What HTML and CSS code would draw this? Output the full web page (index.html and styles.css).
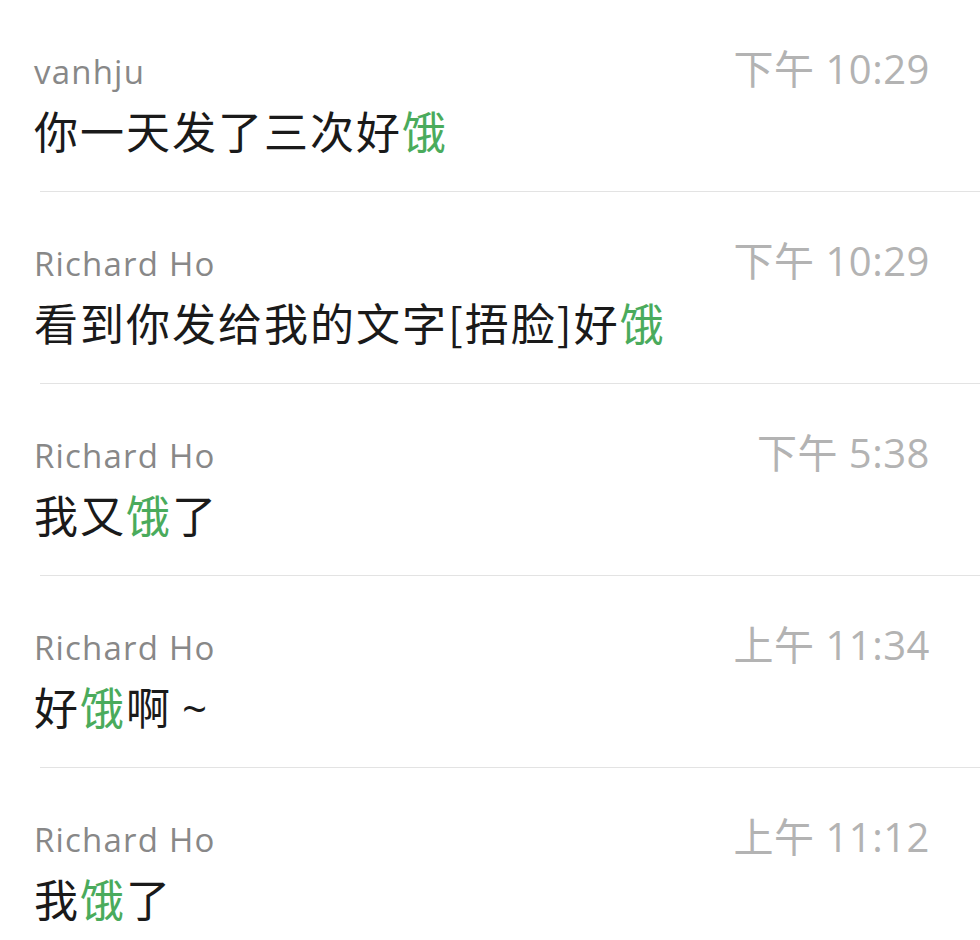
FILE: index.html
```html
<!DOCTYPE html>
<html>
  <head>
    <link rel="stylesheet" href="styles.css">
    <meta charset="utf-8" />
    <meta name="viewport" content="width=device-width, initial-scale=1" />
    <title>搜索结果</title>
  </head>
  <body>
    <ul class="results">
      <li class="item">
        <div class="head">
          <span class="name">vanhju</span>
          <span class="time">下午 10:29</span>
        </div>
        <p class="msg">你一天发了三次好<em>饿</em></p>
      </li>
      <li class="item">
        <div class="head">
          <span class="name">Richard Ho</span>
          <span class="time">下午 10:29</span>
        </div>
        <p class="msg">看到你发给我的文字[捂脸]好<em>饿</em></p>
      </li>
      <li class="item">
        <div class="head">
          <span class="name">Richard Ho</span>
          <span class="time">下午 5:38</span>
        </div>
        <p class="msg">我又<em>饿</em>了</p>
      </li>
      <li class="item">
        <div class="head">
          <span class="name">Richard Ho</span>
          <span class="time">上午 11:34</span>
        </div>
        <p class="msg">好<em>饿</em>啊<span class="tilde">~</span></p>
      </li>
      <li class="item">
        <div class="head">
          <span class="name">Richard Ho</span>
          <span class="time">上午 11:12</span>
        </div>
        <p class="msg">我<em>饿</em>了</p>
      </li>
    </ul>
  </body>
</html>
```

FILE: styles.css
```css
body {
  margin: 0;
  background: #fff;
  font-family: "Open Sans", "Noto Sans CJK SC", sans-serif;
  color: #1a1a1a;
}

.results {
  list-style: none;
  margin: 0;
  padding: 0;
}

.item {
  display: flex;
  flex-direction: column;
  box-sizing: border-box;
  height: 192px;
  padding: 47px 50px 0 34px;
}

.item::after {
  content: "";
  display: block;
  height: 1px;
  margin: auto -50px 0 6px;
  background: #e3e3e3;
}

.head {
  display: flex;
  justify-content: space-between;
  align-items: baseline;
  height: 44px;
}

.name {
  font-size: 33px;
  line-height: 44px;
  letter-spacing: 1.2px;
  color: #888;
}

.time {
  font-size: 40px;
  line-height: 44px;
  letter-spacing: 0.5px;
  color: #b3b3b3;
}

.msg {
  margin: 11px 0 0;
  font-family: "Noto Sans CJK SC", sans-serif;
  font-size: 44px;
  line-height: 56px;
  letter-spacing: 2px;
}

.msg em {
  font-style: normal;
  color: #4aab5c;
}

.tilde {
  margin-left: 10px;
  font-family: "Open Sans", sans-serif;
}
```
